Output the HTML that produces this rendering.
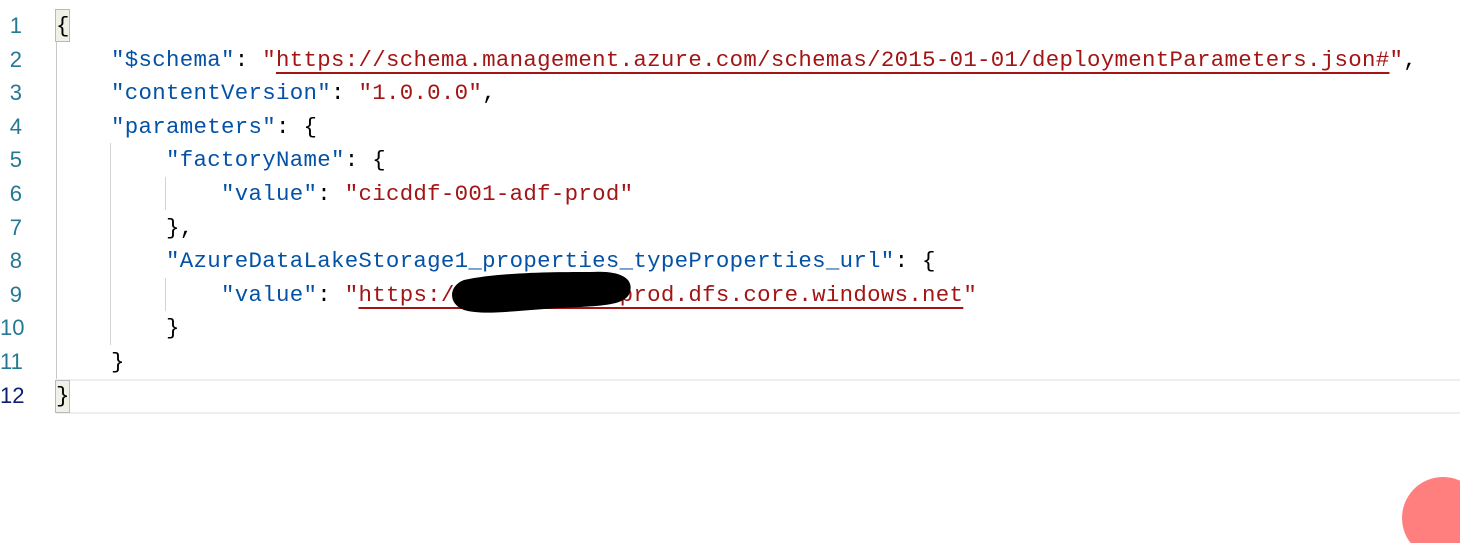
<!DOCTYPE html>
<html><head><meta charset="utf-8"><style>
html,body{margin:0;padding:0;width:1460px;height:543px;background:#fff;overflow:hidden;position:relative}
.ln{position:absolute;left:0;width:22px;text-align:right;font:22px "Liberation Sans",sans-serif;color:#237893;height:34px;line-height:34px}
.c{position:absolute;left:56px;white-space:pre;font:22.4px/34px "Liberation Mono",monospace;letter-spacing:0.31px;color:#000;height:34px}
.k{color:#0451a5}.s{color:#a31515}
.u{text-decoration:underline;text-decoration-color:#a31515;text-underline-offset:6px;text-decoration-thickness:2px}
.g{position:absolute;width:1px;background:#d3d3d3}
</style></head><body>
<div style="position:absolute;left:56px;top:379px;width:1404px;height:31px;border-top:2px solid #eee;border-bottom:2px solid #eee"></div>
<div style="position:absolute;left:55px;top:9px;width:13px;height:31px;background:#eef2e6;border:1px solid #b9b9b9"></div>
<div style="position:absolute;left:55px;top:380px;width:13px;height:31px;background:#eef2e6;border:1px solid #b9b9b9"></div>
<div class="g" style="left:56px;top:42px;height:337px;background:#c8c8c8"></div>
<div class="g" style="left:110px;top:143px;height:202px"></div>
<div class="g" style="left:165px;top:177px;height:33px"></div>
<div class="g" style="left:165px;top:278px;height:33px"></div>

<div class="ln" style="top:9px">1</div>
<div class="ln" style="top:43px">2</div>
<div class="ln" style="top:76px">3</div>
<div class="ln" style="top:110px">4</div>
<div class="ln" style="top:143px">5</div>
<div class="ln" style="top:177px">6</div>
<div class="ln" style="top:211px">7</div>
<div class="ln" style="top:244px">8</div>
<div class="ln" style="top:278px">9</div>
<div class="ln" style="top:311px">10</div>
<div class="ln" style="top:345px">11</div>
<div class="ln" style="top:379px;color:#0b216f">12</div>

<div class="c" style="top:9px">{</div>
<div class="c" style="top:43px">    <span class="k">"$schema"</span>: <span class="s">"<span class="u">https://schema.management.azure.com/schemas/2015-01-01/deploymentParameters.json#</span>"</span>,</div>
<div class="c" style="top:76px">    <span class="k">"contentVersion"</span>: <span class="s">"1.0.0.0"</span>,</div>
<div class="c" style="top:110px">    <span class="k">"parameters"</span>: {</div>
<div class="c" style="top:143px">        <span class="k">"factoryName"</span>: {</div>
<div class="c" style="top:177px">            <span class="k">"value"</span>: <span class="s">"cicddf-001-adf-prod"</span></div>
<div class="c" style="top:211px">        },</div>
<div class="c" style="top:244px">        <span class="k">"AzureDataLakeStorage1_properties_typeProperties_url"</span>: {</div>
<div class="c" style="top:278px">            <span class="k">"value"</span>: <span class="s">"<span class="u">https://xxxxxxxxxxxprod.dfs.core.windows.net</span>"</span></div>
<div class="c" style="top:311px">        }</div>
<div class="c" style="top:345px">    }</div>
<div class="c" style="top:379px">}</div>

<svg style="position:absolute;left:440px;top:266px" width="200" height="52"><path d="M24 14 C60 6 120 6 150 6 C180 4 194 12 190 26 C186 40 160 40 120 42 C80 44 44 50 24 44 C8 38 8 20 24 14Z" fill="#000"/></svg>
<div style="position:absolute;left:1402px;top:477px;width:82px;height:82px;border-radius:50%;background:#ff7f7f"></div>
</body></html>
